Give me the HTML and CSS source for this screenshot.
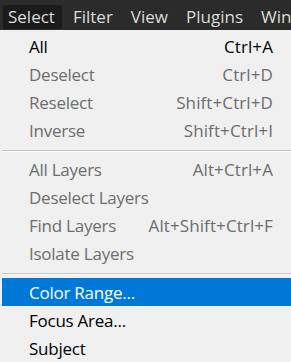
FILE: index.html
```html
<!DOCTYPE html>
<html>
<head>
<meta charset="utf-8">
<link rel="stylesheet" href="styles.css">
</head>
<body>
<div class="menubar">
  <span class="top-item active">Select</span>
  <span class="top-item">Filter</span>
  <span class="top-item">View</span>
  <span class="top-item">Plugins</span>
  <span class="top-item">Win</span>
</div>
<div class="menu">
  <div class="item"><span class="label">All</span><span class="key">Ctrl+A</span></div>
  <div class="item disabled"><span class="label">Deselect</span><span class="key">Ctrl+D</span></div>
  <div class="item disabled"><span class="label">Reselect</span><span class="key">Shift+Ctrl+D</span></div>
  <div class="item disabled"><span class="label">Inverse</span><span class="key">Shift+Ctrl+I</span></div>
  <div class="sep"></div>
  <div class="item disabled"><span class="label">All Layers</span><span class="key">Alt+Ctrl+A</span></div>
  <div class="item disabled"><span class="label">Deselect Layers</span><span class="key"></span></div>
  <div class="item disabled"><span class="label">Find Layers</span><span class="key">Alt+Shift+Ctrl+F</span></div>
  <div class="item disabled"><span class="label">Isolate Layers</span><span class="key"></span></div>
  <div class="sep"></div>
  <div class="item selected"><span class="label">Color Range...</span><span class="key"></span></div>
  <div class="item"><span class="label">Focus Area...</span><span class="key"></span></div>
  <div class="item"><span class="label">Subject</span><span class="key"></span></div>
</div>
</body>
</html>
```
FILE: styles.css
```css
html, body {
  margin: 0;
  padding: 0;
}
body {
  width: 291px;
  height: 362px;
  overflow: hidden;
  background: #f0f0f0;
  font-family: "Open Sans", "Noto Sans", sans-serif;
  font-size: 17px;
}
.menubar {
  height: 30px;
  box-sizing: border-box;
  padding: 5px 0 0 3px;
  background: #2b2b2b;
  display: flex;
  gap: 6px;
  white-space: nowrap;
  overflow: hidden;
}
.top-item {
  height: 24px;
  line-height: 24px;
  padding: 0 7px 0 5px;
  color: #dcdcdc;
  border-radius: 2px;
}
.top-item.active {
  background: #1b1b1b;
}
.menu {
  padding: 2px 0 0 2px;
}
.item {
  height: 28px;
  display: flex;
  align-items: center;
  justify-content: space-between;
  padding: 0 18px 0 27px;
  color: #000;
  white-space: nowrap;
}
.label {
  letter-spacing: -0.25px;
}
.key {
  letter-spacing: 0.1px;
}
.item.disabled {
  color: #6d6d6d;
}
.item.selected {
  background: #0078d7;
  color: #fff;
}
.sep {
  margin: 6px 0 3px;
  border-top: 1px solid #c3c3c3;
  border-bottom: 1px solid #fbfbfb;
}
```
